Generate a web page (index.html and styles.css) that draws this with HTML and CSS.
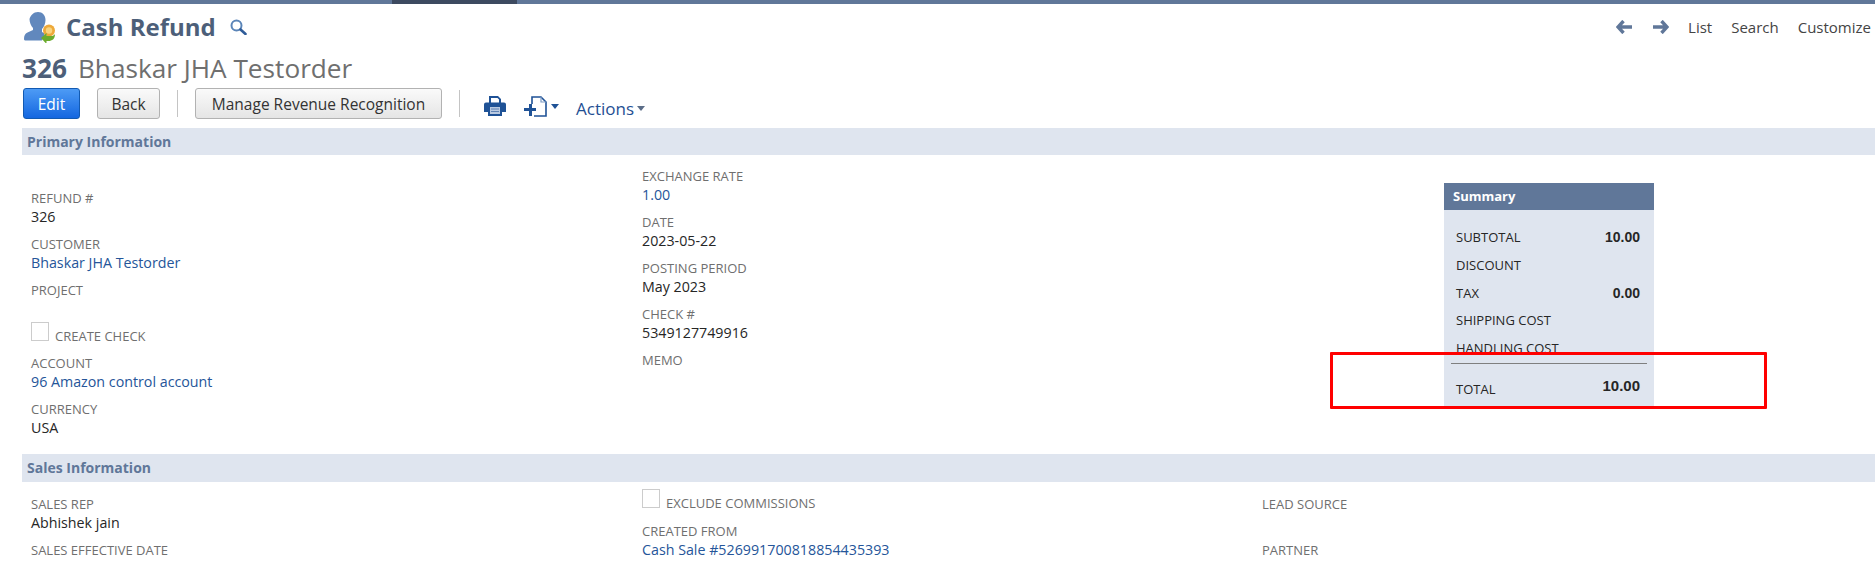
FILE: index.html
```html
<!DOCTYPE html>
<html>
<head>
    <title>Cash Refund</title>
    <meta charset="utf-8">
    <link rel="stylesheet" href="styles.css">
</head>
<body>
    <div class="top-bar"><div class="top-bar-active"></div></div>

    <div class="page-head">
        <div class="page-title">
            <svg class="title-icon" width="32" height="31" viewBox="0 0 32 31">
                <path d="M14 0c4.500 0 7.500 3.500 7.500 8 0 3.500-1.500 7-3.500 9v3l3 1.500-3 7H2c-1.200 0-2-.5-2-1.500 0-3 1-5.500 3.500-6.500l5.500-2.500v-2c-2-2-3.500-5.500-3.500-9C6.500 3.500 9.500 0 14 0z" fill="#6188bd"/>
                <circle cx="25" cy="18.500" r="6" fill="#eea93a"/>
                <circle cx="25" cy="18.500" r="3.200" fill="#f8d47e"/>
                <path d="M17 26l5.500-5v3h5c1.200 0 2.500-.5 3.500-2 0 5-3 7-6.500 7h-2v3z" fill="#6bab2d"/>
            </svg>
            <h1>Cash Refund</h1>
            <svg class="title-search" width="17" height="16" viewBox="0 0 17 16">
                <circle cx="6.500" cy="6.500" r="5" fill="none" stroke="#5b85b8" stroke-width="2"/>
                <path d="M10.500 10.500l5 4.500" stroke="#2f5c99" stroke-width="2.600" stroke-linecap="round"/>
            </svg>
        </div>
        <div class="page-nav">
            <svg width="17" height="14" viewBox="0 0 17 14"><path d="M7.500 1L2 7l5.500 6M2.500 7H16" fill="none" stroke="#607799" stroke-width="3.400"/></svg>
            <svg class="nav-next" width="17" height="14" viewBox="0 0 17 14"><path d="M9.500 1L15 7l-5.500 6M14.500 7H1" fill="none" stroke="#607799" stroke-width="3.400"/></svg>
            <a>List</a>
            <a>Search</a>
            <a>Customize</a>
        </div>
    </div>

    <div class="record-title"><b>326</b><span>Bhaskar JHA Testorder</span></div>

    <div class="toolbar">
        <button class="btn btn-primary">Edit</button>
        <button class="btn btn-back">Back</button>
        <div class="toolbar-sep"></div>
        <button class="btn btn-manage">Manage Revenue Recognition</button>
        <div class="toolbar-sep"></div>
        <svg class="icon-print" width="22" height="20" viewBox="0 0 22 20">
            <path d="M5 0h9l3 3v5h-2V3.500L13.500 2H7v6H5z" fill="#1f5296"/>
            <path d="M2 6.500h18a2 2 0 0 1 2 2V16h-4v4H4v-4H0V8.500a2 2 0 0 1 2-2z" fill="#1f5296"/>
            <path d="M6 11h10v7H6z" fill="#b9c9e0"/>
            <path d="M7 13h8M7 15.500h8" stroke="#5f82b4" stroke-width="1"/>
        </svg>
        <svg class="icon-new" width="24" height="21" viewBox="0 0 24 21">
            <path d="M9 8V1h9l5 5v14H11" fill="none" stroke="#1f5296" stroke-width="1.600"/>
            <path d="M18 1v5h5" fill="none" stroke="#7d9cc6" stroke-width="1.200"/>
            <path d="M6 8h3v4h4v3H9v5H6v-5H1v-3h5z" fill="#1f5296"/>
        </svg>
        <span class="caret caret-new"></span>
        <a class="actions">Actions</a>
        <span class="caret caret-actions"></span>
    </div>

    <div class="section-head">Primary Information</div>
    <div class="section primary">
        <div class="col col-one">
            <div class="field"><div class="label">REFUND #</div><div class="value">326</div></div>
            <div class="field"><div class="label">CUSTOMER</div><div class="value link">Bhaskar JHA Testorder</div></div>
            <div class="field field-short"><div class="label">PROJECT</div></div>
            <div class="check-field"><span class="checkbox"></span><span class="label">CREATE CHECK</span></div>
            <div class="field"><div class="label">ACCOUNT</div><div class="value link">96 Amazon control account</div></div>
            <div class="field"><div class="label">CURRENCY</div><div class="value">USA</div></div>
        </div>
        <div class="col col-two">
            <div class="field"><div class="label">EXCHANGE RATE</div><div class="value link">1.00</div></div>
            <div class="field"><div class="label">DATE</div><div class="value">2023-05-22</div></div>
            <div class="field"><div class="label">POSTING PERIOD</div><div class="value">May 2023</div></div>
            <div class="field"><div class="label">CHECK #</div><div class="value">5349127749916</div></div>
            <div class="field"><div class="label">MEMO</div></div>
        </div>
        <div class="summary">
            <div class="summary-head">Summary</div>
            <div class="summary-body">
                <div class="summary-row"><span>SUBTOTAL</span><b>10.00</b></div>
                <div class="summary-row"><span>DISCOUNT</span></div>
                <div class="summary-row"><span>TAX</span><b>0.00</b></div>
                <div class="summary-row"><span>SHIPPING COST</span></div>
                <div class="summary-row"><span>HANDLING COST</span></div>
                <div class="summary-total"><span>TOTAL</span><b>10.00</b></div>
            </div>
        </div>
    </div>

    <div class="section-head sales-head">Sales Information</div>
    <div class="section sales">
        <div class="col col-one">
            <div class="field"><div class="label">SALES REP</div><div class="value">Abhishek jain</div></div>
            <div class="field"><div class="label">SALES EFFECTIVE DATE</div></div>
        </div>
        <div class="col col-two">
            <div class="check-field"><span class="checkbox"></span><span class="label">EXCLUDE COMMISSIONS</span></div>
            <div class="field"><div class="label">CREATED FROM</div><div class="value link">Cash Sale #526991700818854435393</div></div>
        </div>
        <div class="col col-three">
            <div class="field"><div class="label">LEAD SOURCE</div></div>
            <div class="field"><div class="label">PARTNER</div></div>
        </div>
    </div>

    <div class="highlight"></div>
</body>
</html>
```

FILE: styles.css
```css
html, body {
    height: 563px;
    overflow: hidden;
}
body {
    margin: 0;
    position: relative;
    background: #fff;
    color: #262626;
    font-family: "Open Sans", "Liberation Sans", sans-serif;
    font-size: 14px;
}
.top-bar {
    height: 4px;
    background-color: #607799;
}
.top-bar-active {
    width: 125px;
    height: 4px;
    margin-left: 392px;
    background-color: #3d4a60;
}
.page-head {
    display: flex;
    justify-content: space-between;
    align-items: center;
    height: 40px;
    box-sizing: border-box;
    padding: 6px 4px 0 24px;
}
.page-title {
    display: flex;
    align-items: center;
}
.page-title h1 {
    margin: 0 0 0 10px;
    font-size: 24px;
    font-weight: 700;
    line-height: 30px;
    color: #4d5f79;
}
.title-search {
    margin-left: 14px;
}
.page-nav {
    display: flex;
    align-items: center;
    color: #444;
    font-size: 15px;
}
.nav-next {
    margin-left: 19px;
}
.page-nav a {
    margin-left: 19px;
}
.record-title {
    display: flex;
    align-items: baseline;
    height: 44px;
    box-sizing: border-box;
    padding: 5px 0 0 22px;
    font-size: 26.200px;
    line-height: 39px;
    color: #6f6f6f;
}
.record-title b {
    margin-right: 11px;
    color: #4d5f79;
}
.toolbar {
    display: flex;
    align-items: center;
    height: 31px;
    margin-bottom: 9px;
    padding-left: 23px;
}
.btn {
    height: 31px;
    padding: 0;
    border: 1px solid #b2b2b2;
    border-radius: 3px;
    background: linear-gradient(#fafafa, #e5e5e5);
    color: #333;
    font-family: inherit;
    font-size: 15.500px;
    font-weight: 500;
}
.btn-primary {
    width: 57px;
    border-color: #125ab2;
    background: linear-gradient(#4d9bf5, #1467e0);
    color: #fff;
}
.btn-back {
    width: 63px;
    margin-left: 17px;
}
.btn-manage {
    width: 247px;
}
.toolbar-sep {
    width: 1px;
    height: 27px;
    margin: 0 17px;
    background-color: #c4c4c4;
}
.icon-print {
    margin: 5px 0 0 7px;
}
.icon-new {
    margin: 5px 0 0 17px;
}
.caret {
    width: 0;
    height: 0;
    border-left: 4.500px solid transparent;
    border-right: 4.500px solid transparent;
    border-top: 5px solid #1f5296;
}
.caret-new {
    margin: 5px 0 0 4px;
}
.caret-actions {
    margin: 9px 0 0 3px;
    border-top-color: #5b6d88;
}
.actions {
    margin: 9px 0 0 17px;
    color: #1f4f93;
    font-size: 17px;
}
.section-head {
    height: 27px;
    margin-left: 22px;
    padding-left: 5px;
    background-color: #dfe5ef;
    color: #607799;
    font-size: 14px;
    font-weight: 700;
    line-height: 27px;
}
.sales-head {
    height: 28px;
    line-height: 28px;
}
.section {
    display: flex;
    padding-left: 31px;
}
.primary {
    height: 299px;
}
.col-one {
    width: 611px;
}
.col-two {
    width: 620px;
}
.primary .col-one {
    padding-top: 34px;
}
.primary .col-two {
    padding-top: 12px;
}
.sales {
    padding-top: 13px;
}
.sales .col-two {
    margin-top: -6px;
}
.sales .check-field {
    height: 33px;
}
.field {
    height: 46px;
}
.field-short {
    height: 41px;
}
.label {
    color: #6f6f6f;
    font-size: 13px;
    line-height: 18px;
}
.value {
    font-size: 14.250px;
    line-height: 20px;
}
.link {
    color: #255599;
}
.check-field {
    display: flex;
    height: 32px;
}
.check-field .label {
    margin-top: 5px;
}
.checkbox {
    width: 18px;
    height: 19px;
    margin-right: 6px;
    border: 1px solid #ccc;
    box-sizing: border-box;
}
.summary {
    width: 210px;
    margin: 28px 0 0 182px;
}
.summary-head {
    height: 27px;
    padding-left: 9px;
    background-color: #607799;
    color: #fff;
    font-size: 13px;
    font-weight: 700;
    line-height: 27px;
}
.summary-body {
    height: 197px;
    padding: 14px 14px 0 12px;
    box-sizing: border-box;
    background-color: #dfe5ef;
}
.summary-row, .summary-total {
    display: flex;
    justify-content: space-between;
    height: 27.750px;
    font-size: 13px;
    line-height: 27.750px;
}
.summary-row b, .summary-total b {
    font-family: "Liberation Sans", Arial, sans-serif;
    font-size: 14px;
}
.summary-total {
    margin: 0 -7px 0 -5px;
    padding: 12px 7px 0 5px;
    border-top: 1px solid #7f7f7f;
}
.summary-total b {
    margin-top: -4px;
    font-size: 15px;
}
.highlight {
    position: absolute;
    left: 1330px;
    top: 352px;
    width: 437px;
    height: 57px;
    box-sizing: border-box;
    border: 3px solid #f00;
    border-radius: 1px;
}
```
